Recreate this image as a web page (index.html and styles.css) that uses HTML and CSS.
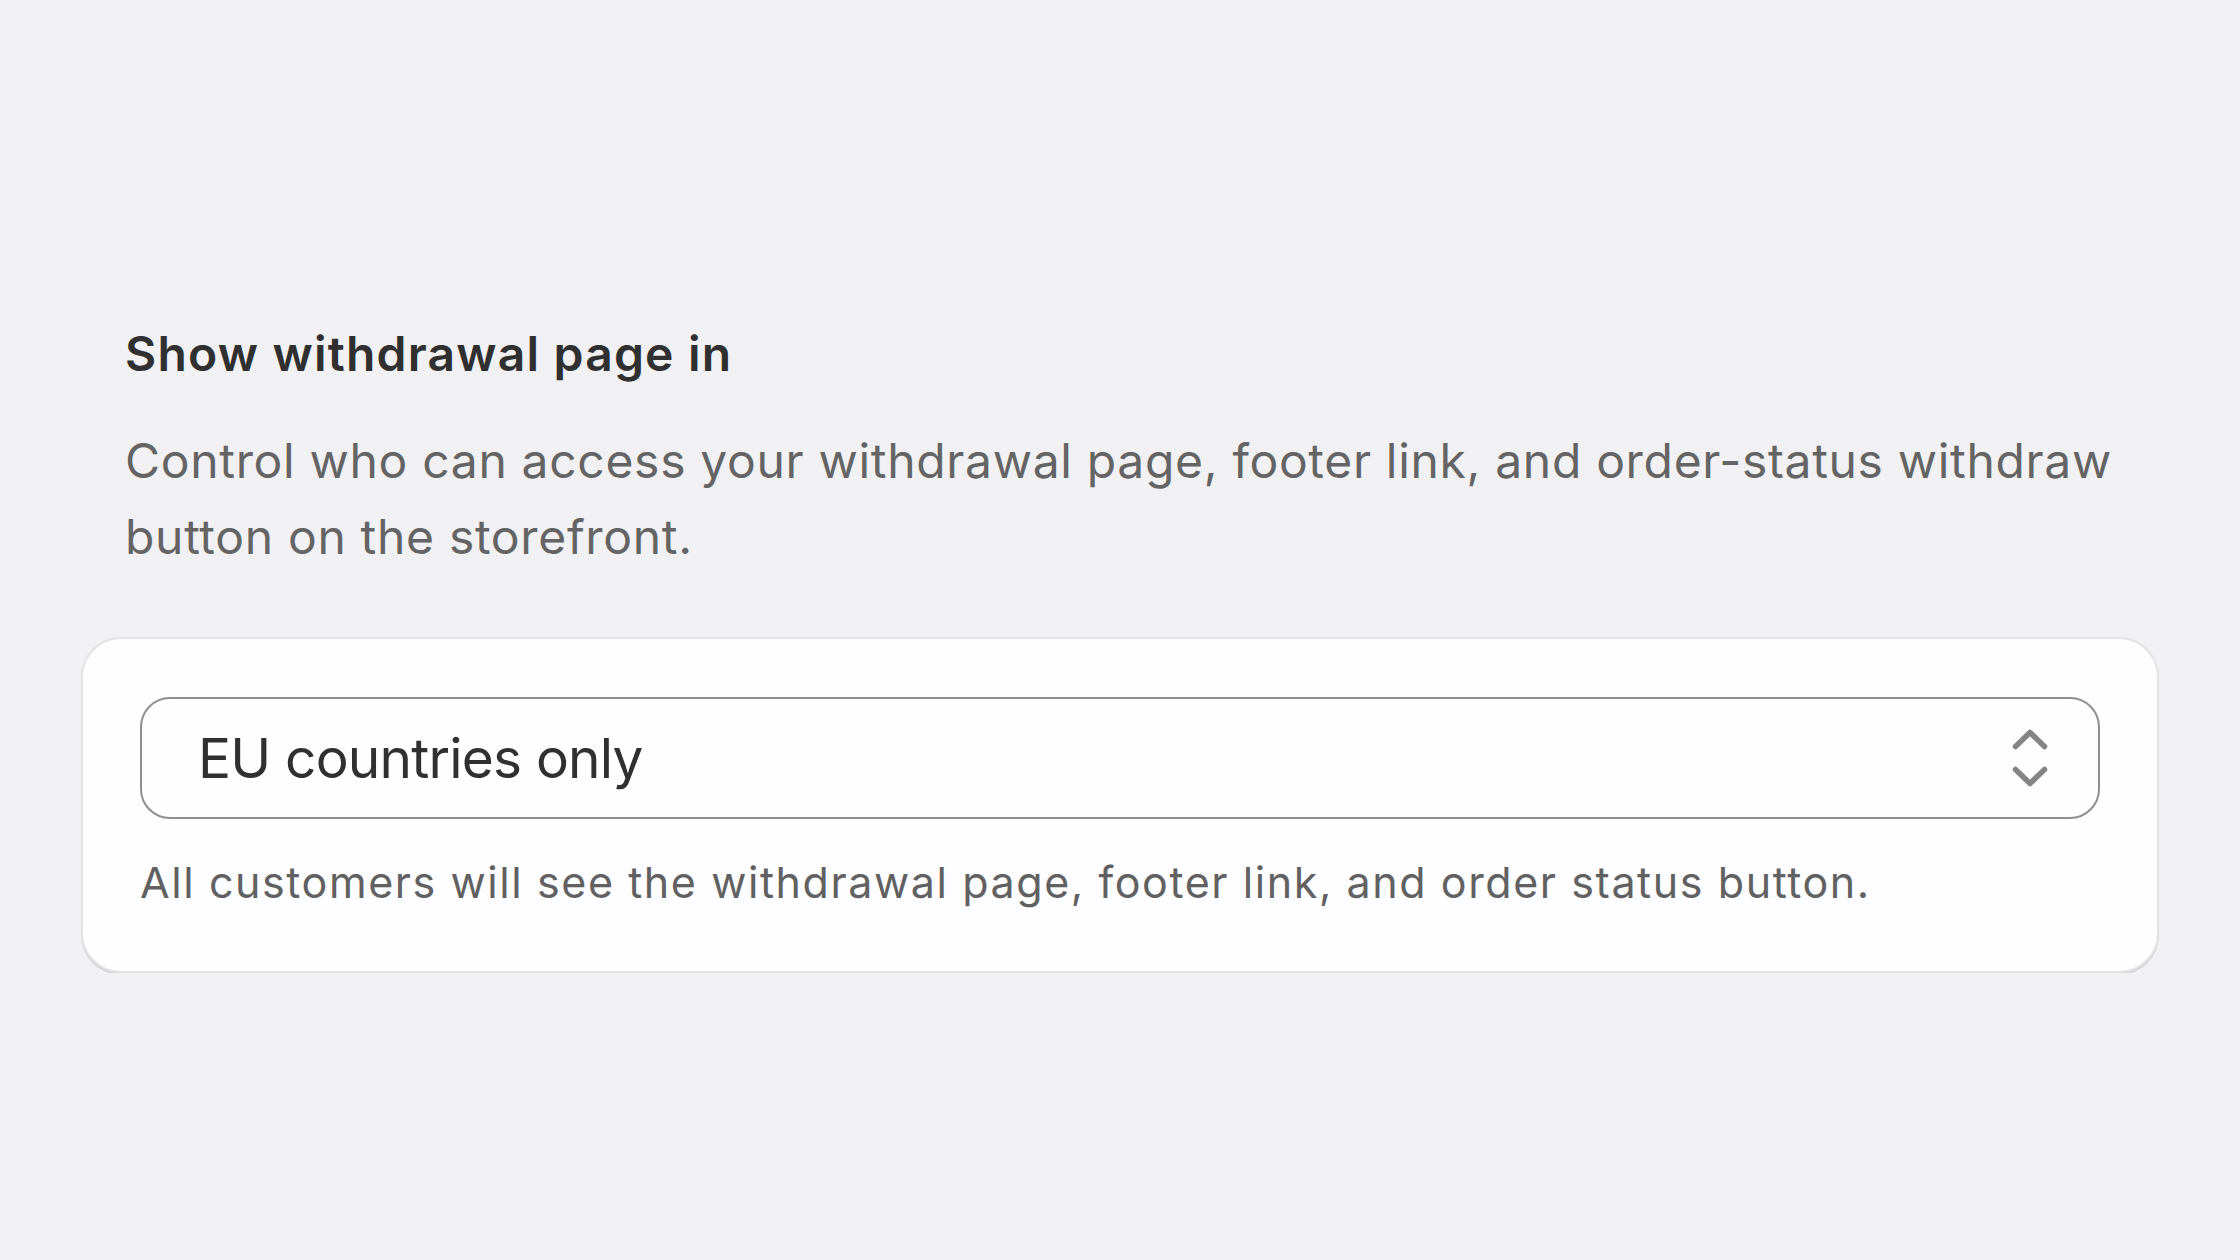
FILE: index.html
```html
<!DOCTYPE html>
<html lang="en">
<head>
  <meta charset="UTF-8">
  <meta name="viewport" content="width=device-width, initial-scale=1.0">
  <title>Withdrawal settings</title>
  <link rel="stylesheet" href="styles.css">
</head>
<body>

<section class="settings-page">
  <div class="section-intro">
    <h2 class="section-title">Show withdrawal page in</h2>
    <p class="section-desc">Control who can access your withdrawal page, footer link, and order-status withdraw button on the storefront.</p>
  </div>

  <div class="settings-card">
    <div class="select-box">
      <span class="select-value">EU countries only</span>
      <svg class="select-arrows" width="36" height="58" viewBox="0 0 36 58" aria-hidden="true">
        <path d="M3.5 17.5 L18 3.5 L32.5 17.5" />
        <path d="M3.5 40.5 L18 54.5 L32.5 40.5" />
      </svg>
    </div>
    <p class="help-text">All customers will see the withdrawal page, footer link, and order status button.</p>
  </div>
</section>

</body>
</html>
```

FILE: styles.css
```css
body {
  margin: 0;
  background-color: #f1f0f3;
  font-family: Inter, "Noto Sans", sans-serif;
}

.settings-page {
  padding: 325px 81px 0;
}

.section-intro {
  padding-left: 44px;
}

.section-title {
  margin: 0;
  font-size: 48px;
  font-weight: 600;
  line-height: 58px;
  letter-spacing: 1.2px;
  color: #303030;
}

.section-desc {
  margin: 40px 0 0;
  font-size: 48px;
  line-height: 76px;
  letter-spacing: 0.68px;
  color: #646464;
}

.settings-card {
  margin-top: 62px;
  background-color: #fefdff;
  border: 2px solid #e3e3e3;
  border-radius: 40px;
  box-shadow: 0 2px 0 #d5d5d5;
  padding: 58px 57px 63px;
}

.select-box {
  display: flex;
  align-items: center;
  justify-content: space-between;
  height: 118px;
  border: 2px solid #8f8f8f;
  border-radius: 30px;
  padding: 0 50px 0 56px;
  background-color: #fefdff;
}

.select-value {
  font-size: 55px;
  letter-spacing: -0.8px;
  color: #303030;
}

.select-arrows path {
  fill: none;
  stroke: #858585;
  stroke-width: 5.5;
  stroke-linecap: round;
  stroke-linejoin: round;
}

.help-text {
  margin: 37px 0 0;
  font-size: 43px;
  line-height: 52px;
  letter-spacing: 1.58px;
  color: #616161;
}
```
